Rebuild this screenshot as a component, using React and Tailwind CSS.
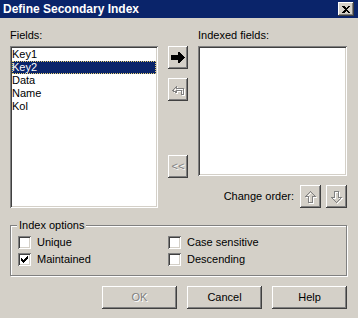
const RAISED =
  "shadow-[inset_-1px_-1px_#404040,inset_1px_1px_#ffffff,inset_-2px_-2px_#808080,inset_2px_2px_#d4d0c8]";
const SUNKEN =
  "shadow-[inset_1px_1px_#808080,inset_-1px_-1px_#ffffff,inset_2px_2px_#404040,inset_-2px_-2px_#d4d0c8]";

function Btn({ className = "", children, disabled }) {
  return (
    <div
      className={`flex items-center justify-center bg-[#d4d0c8] ${RAISED} ${
        disabled ? "text-[#808080] [text-shadow:1px_1px_#ffffff]" : "text-black"
      } ${className}`}
    >
      {children}
    </div>
  );
}

function DisabledIcon({ d, w = 14, h = 14 }) {
  return (
    <svg width={w} height={h} viewBox={`0 0 ${w} ${h}`} fill="none" strokeWidth="1" shapeRendering="crispEdges">
      <path d={d} stroke="#ffffff" transform="translate(1 1)" />
      <path d={d} stroke="#808080" />
    </svg>
  );
}

// classic 7x7 check glyph
const CHECK_ROWS = ["......X", ".....XX", "X...XXX", "XX.XXX.", "XXXXX..", ".XXX...", "..X...."];

function Check({ checked, label }) {
  return (
    <div className="flex items-center h-[13px]">
      <div className={`w-[13px] h-[13px] bg-white ${SUNKEN} flex items-center justify-center`}>
        {checked && (
          <svg width="7" height="7" viewBox="0 0 7 7" shapeRendering="crispEdges">
            {CHECK_ROWS.map((row, y) =>
              row.split("").map((c, x) => (c === "X" ? <rect key={`${x}-${y}`} x={x} y={y} width="1" height="1" fill="#000" /> : null))
            )}
          </svg>
        )}
      </div>
      <span className="ml-[6px] leading-[13px]">{label}</span>
    </div>
  );
}

const FIELDS = ["Key1", "Key2", "Data", "Name", "Kol"];

export default function App() {
  return (
    <div className="w-[358px] h-[318px] bg-[#d4d0c8] flex flex-col font-['Liberation_Sans',Arial,sans-serif] text-[11px] text-black overflow-hidden">
      {/* title bar */}
      <div className="h-[18px] bg-[#0a246a] flex items-center justify-between pl-[3px] pr-[4px]">
        <span className="text-white font-bold text-[12px] leading-none">Define Secondary Index</span>
        <Btn className="w-[16px] h-[14px]">
          <svg width="8" height="7" viewBox="0 0 8 7" shapeRendering="crispEdges">
            <path d="M0 0h2l2 2 2-2h2L5 3.5 8 7H6L4 5 2 7H0l3-3.5z" fill="#000" />
          </svg>
        </Btn>
      </div>

      <div className="pl-[10px] pr-[11px] flex flex-col">
        {/* labels */}
        <div className="flex mt-[11px] h-[13px] leading-[13px]">
          <span className="w-[188px]">Fields:</span>
          <span>Indexed fields:</span>
        </div>

        {/* main row */}
        <div className="flex mt-[4px] h-[162px]">
          <div className={`w-[148px] bg-white ${SUNKEN} p-[2px]`}>
            {FIELDS.map((f, i) => (
              <div
                key={f}
                className={`h-[13px] leading-[13px] ${
                  i === 1 ? "bg-[#0a246a] text-white outline outline-1 outline-dotted outline-offset-[-1px] outline-[#e8d070]" : ""
                }`}
              >
                {f}
              </div>
            ))}
          </div>

          <div className="ml-[10px] w-[20px] flex flex-col">
            <Btn className="h-[23px]">
              <svg width="14" height="11" viewBox="0 0 14 11" shapeRendering="crispEdges">
                <path d="M0 3h7V0h1l6 5v1l-6 5H7V8H0z" fill="#000" />
              </svg>
            </Btn>
            <Btn className="h-[23px] mt-[9px]" disabled>
              <DisabledIcon w={14} h={14} d="M1.5 7.5l4-4v2h7v6h-2v-4h-5v2z" />
            </Btn>
            <Btn className="h-[23px] mt-[54px] text-[11px]" disabled>
              &lt;&lt;
            </Btn>
          </div>

          <div className="ml-[10px] flex-1 flex flex-col">
            <div className={`h-[130px] bg-white ${SUNKEN}`} />
            <div className="flex items-center justify-end mt-[9px] h-[23px]">
              <span className="mr-[6px]">Change order:</span>
              <Btn className="w-[21px] h-[23px]" disabled>
                <DisabledIcon w={12} h={14} d="M5.5 1.5l5 5h-3v6h-4v-6h-3z" />
              </Btn>
              <Btn className="w-[21px] h-[23px] ml-[5px]" disabled>
                <DisabledIcon w={12} h={14} d="M3.5 1.5h4v6h3l-5 5-5-5h3z" />
              </Btn>
            </div>
          </div>
        </div>

        {/* group box */}
        <div className="relative mt-[17px] h-[51px] border border-[#808080] shadow-[1px_1px_#ffffff,inset_1px_1px_#ffffff]">
          <span className="absolute -top-[7px] left-[6px] px-[2px] bg-[#d4d0c8] leading-[13px]">Index options</span>
          <div className="grid grid-cols-[150px_1fr] gap-y-[4px] pl-[7px] pt-[10px]">
            <Check label="Unique" />
            <Check label="Case sensitive" />
            <Check checked label="Maintained" />
            <Check label="Descending" />
          </div>
        </div>

        {/* buttons */}
        <div className="flex justify-end gap-[10px] mt-[10px]">
          <Btn className="w-[75px] h-[23px]" disabled>OK</Btn>
          <Btn className="w-[75px] h-[23px]">Cancel</Btn>
          <Btn className="w-[75px] h-[23px]">Help</Btn>
        </div>
      </div>
    </div>
  );
}
